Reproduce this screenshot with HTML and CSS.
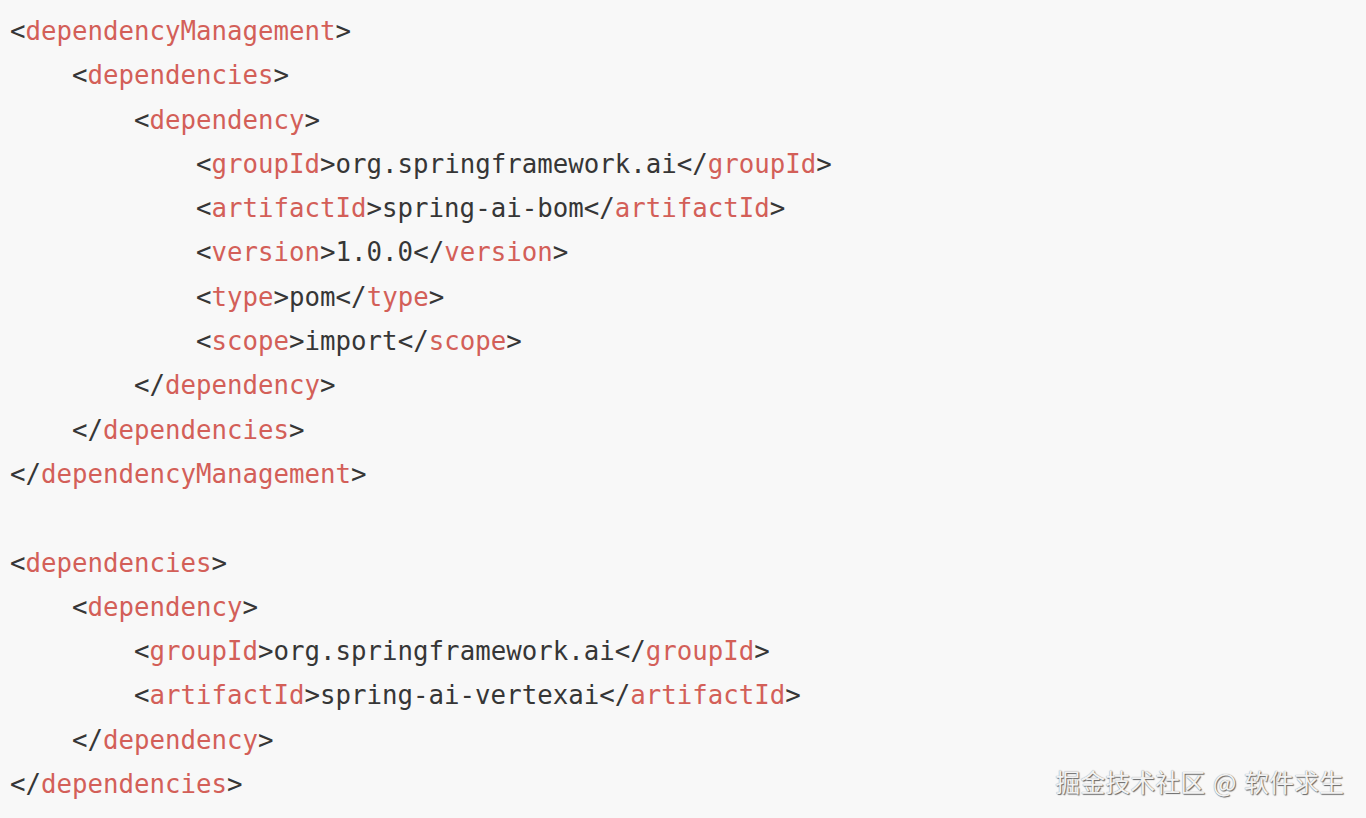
FILE: index.html
```html
<!DOCTYPE html>
<html>
<head>
<meta charset="utf-8">
<link rel="stylesheet" href="styles.css">
</head>
<body>
<div class="page">
<pre class="code"><span class="p">&lt;</span><span class="t">dependencyManagement</span><span class="p">&gt;</span>
    <span class="p">&lt;</span><span class="t">dependencies</span><span class="p">&gt;</span>
        <span class="p">&lt;</span><span class="t">dependency</span><span class="p">&gt;</span>
            <span class="p">&lt;</span><span class="t">groupId</span><span class="p">&gt;</span>org.springframework.ai<span class="p">&lt;/</span><span class="t">groupId</span><span class="p">&gt;</span>
            <span class="p">&lt;</span><span class="t">artifactId</span><span class="p">&gt;</span>spring-ai-bom<span class="p">&lt;/</span><span class="t">artifactId</span><span class="p">&gt;</span>
            <span class="p">&lt;</span><span class="t">version</span><span class="p">&gt;</span>1.0.0<span class="p">&lt;/</span><span class="t">version</span><span class="p">&gt;</span>
            <span class="p">&lt;</span><span class="t">type</span><span class="p">&gt;</span>pom<span class="p">&lt;/</span><span class="t">type</span><span class="p">&gt;</span>
            <span class="p">&lt;</span><span class="t">scope</span><span class="p">&gt;</span>import<span class="p">&lt;/</span><span class="t">scope</span><span class="p">&gt;</span>
        <span class="p">&lt;/</span><span class="t">dependency</span><span class="p">&gt;</span>
    <span class="p">&lt;/</span><span class="t">dependencies</span><span class="p">&gt;</span>
<span class="p">&lt;/</span><span class="t">dependencyManagement</span><span class="p">&gt;</span>

<span class="p">&lt;</span><span class="t">dependencies</span><span class="p">&gt;</span>
    <span class="p">&lt;</span><span class="t">dependency</span><span class="p">&gt;</span>
        <span class="p">&lt;</span><span class="t">groupId</span><span class="p">&gt;</span>org.springframework.ai<span class="p">&lt;/</span><span class="t">groupId</span><span class="p">&gt;</span>
        <span class="p">&lt;</span><span class="t">artifactId</span><span class="p">&gt;</span>spring-ai-vertexai<span class="p">&lt;/</span><span class="t">artifactId</span><span class="p">&gt;</span>
    <span class="p">&lt;/</span><span class="t">dependency</span><span class="p">&gt;</span>
<span class="p">&lt;/</span><span class="t">dependencies</span><span class="p">&gt;</span></pre>
<div class="watermark">掘金技术社区 @ 软件求生</div>
</div>
</body>
</html>
```

FILE: styles.css
```css
html, body {
  margin: 0;
  padding: 0;
  background: #f8f8f8;
}
.page {
  position: relative;
  width: 1366px;
  height: 818px;
  overflow: hidden;
  background: #f8f8f8;
}
.code {
  margin: 0;
  padding: 9px 0 0 10px;
  font-family: "DejaVu Sans Mono", "Liberation Mono", monospace;
  font-size: 25.75px;
  line-height: 44.3px;
  color: #363636;
}
.t {
  color: #d35f58;
}
.p {
  color: #363636;
}
.watermark {
  position: absolute;
  right: 22px;
  bottom: 22px;
  font-family: "Noto Sans CJK SC", sans-serif;
  font-size: 25px;
  line-height: 30px;
  word-spacing: 2px;
  color: #f2f2f2;
  text-shadow: 1px 1px 1px #666, 0 0 1px #888;
}
```
